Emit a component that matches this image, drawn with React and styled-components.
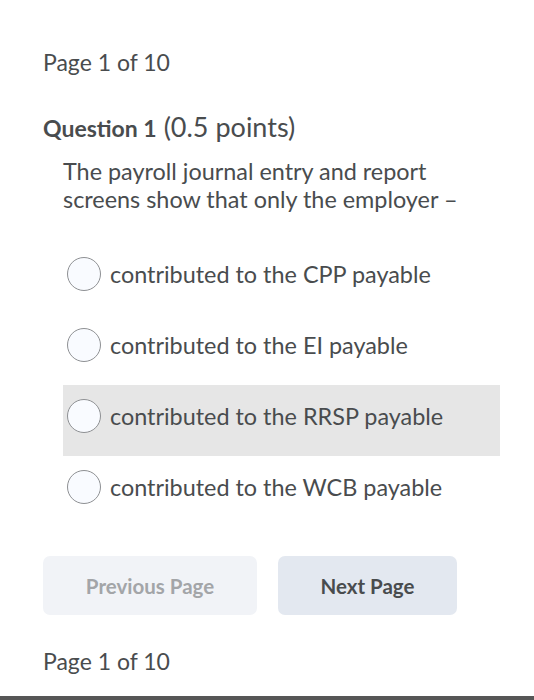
import React, { useState } from 'react'
import styled, { createGlobalStyle } from 'styled-components'

const GlobalStyle = createGlobalStyle`
    html, body {
        margin: 0;
        padding: 0;
        background: #fff;
    }
    body {
        font-family: Lato, "Open Sans", sans-serif;
        color: #494c4e;
    }
`;

const Screen = styled.div`
    width: 534px;
    height: 700px;
    display: flex;
    flex-direction: column;
    box-sizing: border-box;
    overflow: hidden;
`;

const Content = styled.div`
    flex: 1;
    display: flex;
    flex-direction: column;
    padding: 46px 34px 0 43px;
`;

const PageLabel = styled.div`
    font-size: 23px;
    line-height: 32px;
    margin-bottom: ${p => p.gap || 0}px;
`;

const QuestionTitle = styled.h2`
    margin: 0 0 13px;
    font-size: 27px;
    line-height: 31px;
    font-weight: 400;
    strong { font-weight: 700; font-size: 23px; }
`;

const QuestionBody = styled.div`
    padding-left: 20px;
`;

const Prompt = styled.p`
    margin: 0 0 30px;
    font-size: 23.4px;
    line-height: 28px;
`;

const OptionList = styled.div`
    display: flex;
    flex-direction: column;
`;

const OptionRow = styled.label`
    display: flex;
    align-items: center;
    gap: 9px;
    height: 71px;
    box-sizing: border-box;
    padding: 0 0 10px 4px;
    font-size: 23.4px;
    cursor: pointer;
    background: ${p => (p.hover ? '#e6e6e6' : 'transparent')};
`;

const Radio = styled.span`
    width: 34px;
    height: 34px;
    box-sizing: border-box;
    border-radius: 50%;
    border: 1.5px solid #8e9093;
    background: #f9fbff;
    flex-shrink: 0;
    display: flex;
    align-items: center;
    justify-content: center;
    &::after {
        content: '';
        width: 13px;
        height: 13px;
        border-radius: 50%;
        background: ${p => (p.checked ? '#494c4e' : 'transparent')};
    }
`;

const ButtonBar = styled.div`
    display: flex;
    gap: 21px;
    margin: 29px 0 30px;
`;

const NavButton = styled.button`
    width: ${p => p.w}px;
    height: 59px;
    border: none;
    border-radius: 7px;
    font-family: Lato, sans-serif;
    font-size: 20.5px;
    font-weight: 700;
    background: ${p => (p.disabled ? '#f1f3f7' : '#e3e8f0')};
    color: ${p => (p.disabled ? '#a3a5a8' : '#494c4e')};
    cursor: ${p => (p.disabled ? 'default' : 'pointer')};
`;

const BottomBar = styled.div`
    height: 4px;
    background: #565656;
`;

const options = [
    'contributed to the CPP payable',
    'contributed to the EI payable',
    'contributed to the RRSP payable',
    'contributed to the WCB payable',
]

export default function App() {
    const [picked, setPicked] = useState(null)
    return (
        <Screen>
            <GlobalStyle />
            <Content>
                <PageLabel gap={33}>Page 1 of 10</PageLabel>
                <QuestionTitle>
                    <strong>Question 1</strong> (0.5 points)
                </QuestionTitle>
                <QuestionBody>
                    <Prompt>
                        The payroll journal entry and report<br />
                        screens show that only the employer –
                    </Prompt>
                    <OptionList>
                        {options.map((o, i) => (
                            <OptionRow key={o} hover={i === 2} onClick={() => setPicked(i)}>
                                <Radio checked={picked === i} />
                                {o}
                            </OptionRow>
                        ))}
                    </OptionList>
                </QuestionBody>
                <ButtonBar>
                    <NavButton w={214} disabled>Previous Page</NavButton>
                    <NavButton w={179}>Next Page</NavButton>
                </ButtonBar>
                <PageLabel>Page 1 of 10</PageLabel>
            </Content>
            <BottomBar />
        </Screen>
    )
}
